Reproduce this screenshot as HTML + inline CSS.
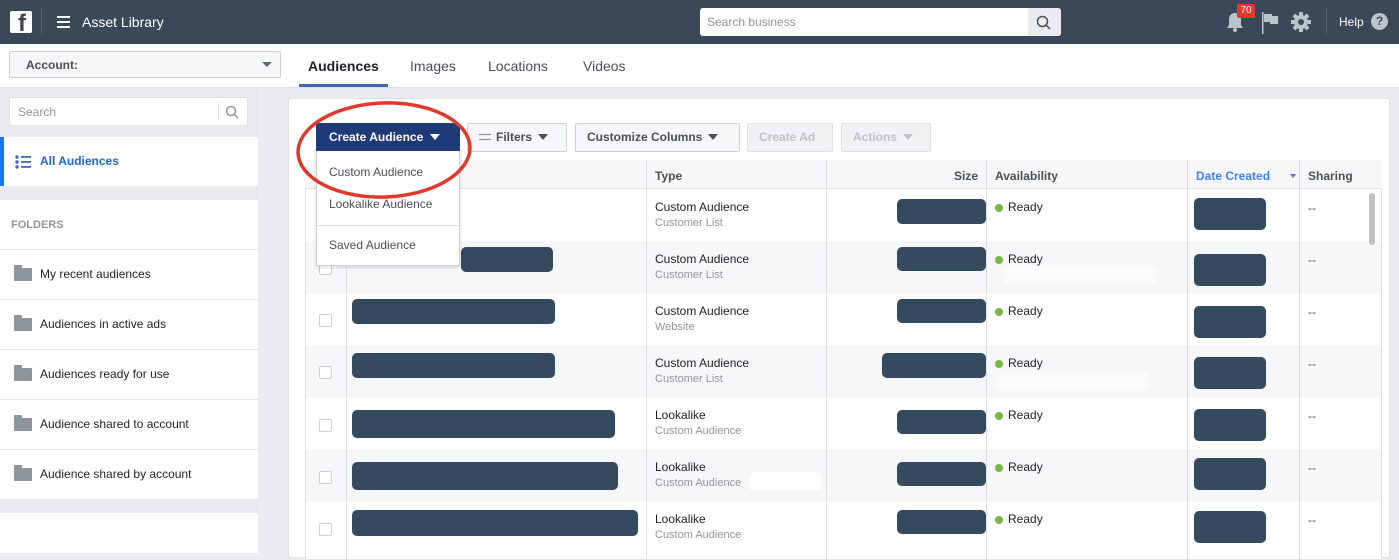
<!DOCTYPE html>
<html><head><meta charset="utf-8"><style>
*{box-sizing:border-box;margin:0;padding:0}
body{width:1399px;height:553px;overflow:hidden;font-family:"Liberation Sans",Helvetica,Arial,sans-serif;background:#e9ebee;position:relative;font-size:12px;color:#1d2129}
.a{position:absolute}
.pill{position:absolute;background:#344a5f;border-radius:5px}
.t1{position:absolute;font-size:12px;color:#1d2129}
.t2{position:absolute;font-size:11px;color:#90949c}
.btn{position:absolute;top:123px;height:29px;border:1px solid #ced0d4;border-radius:2px;background:#f6f7f9;font-weight:bold;font-size:12px;color:#4b4f56;line-height:27px;padding:0 11px}
.dis{color:#bec3c9;background:#f0f1f3;border-color:#dddfe2}
.tri{display:inline-block;width:0;height:0;border-left:5px solid transparent;border-right:5px solid transparent;border-top:6px solid #4b4f56;vertical-align:middle;margin-left:6px;margin-top:-2px}
.fold{position:absolute;left:0;width:258px;height:50px;background:#fff;border-bottom:1px solid #e5e6e9;font-size:12px;color:#1d2129}
.fold span{position:absolute;left:40px;top:17px}
.fold i{position:absolute;left:14px;top:18px;width:18px;height:13px;background:#8d949e;border-radius:1px}
.fold i:before{content:"";position:absolute;left:0;top:-3px;width:8px;height:4px;background:#8d949e;border-radius:1px 1px 0 0}
.cb{position:absolute;left:319px;width:13px;height:13px;border:1px solid #ccd0d5;border-radius:2px;background:#fff}
.dot{position:absolute;left:995px;width:8px;height:8px;border-radius:50%;background:#75b843}
</style></head><body>
<!-- top bar -->
<div class="a" style="left:0;top:0;width:1399px;height:44px;background:#3a4859"></div>
<div class="a" style="left:10px;top:11px;width:22px;height:22px;background:#fff;border-radius:2px;overflow:hidden"><span style="position:absolute;left:8px;top:1px;font-weight:bold;font-size:24px;color:#3a4859;line-height:24px">f</span></div>
<div class="a" style="left:41px;top:8px;width:1px;height:28px;background:#4f5d6e"></div>
<div class="a" style="left:57px;top:16px;width:13px;height:2px;background:#fff;box-shadow:0 5px 0 #fff,0 10px 0 #fff"></div>
<div class="a" style="left:82px;top:14px;color:#fff;font-size:14px">Asset Library</div>
<div class="a" style="left:700px;top:8px;width:361px;height:28px;background:#fff;border-radius:3px"></div>
<div class="a" style="left:707px;top:15px;color:#90949c;font-size:12px">Search business</div>
<div class="a" style="left:1028px;top:8px;width:33px;height:28px;background:#e9ebee;border-radius:0 3px 3px 0"></div>
<svg class="a" style="left:1036px;top:15px" width="16" height="16"><circle cx="6.5" cy="6.5" r="5" fill="none" stroke="#4b4f56" stroke-width="1.5"/><line x1="10" y1="10" x2="14" y2="14" stroke="#4b4f56" stroke-width="1.5"/></svg>
<svg class="a" style="left:1225px;top:11px" width="20" height="22"><path d="M10 2c-4 0-6 3-6 7v5l-2 3h16l-2-3V9c0-4-2-7-6-7z" fill="#bdc3cb"/><circle cx="10" cy="19" r="2" fill="#bdc3cb"/></svg>
<div class="a" style="left:1237px;top:4px;width:18px;height:14px;background:#e8382b;border-radius:2px;color:#fff;font-size:10px;text-align:center;line-height:14px">70</div>
<svg class="a" style="left:1260px;top:12px" width="20" height="22"><rect x="2" y="0" width="1.5" height="22" fill="#bdc3cb"/><path d="M4 2h8v2h6v8h-8v-2H4z" fill="#bdc3cb"/></svg>
<svg class="a" style="left:1290px;top:11px" width="22" height="22" viewBox="0 0 22 22"><g fill="#bdc3cb"><circle cx="11" cy="11" r="7"/><rect x="9" y="1" width="4" height="20"/><rect x="1" y="9" width="20" height="4"/><rect x="9" y="1" width="4" height="20" transform="rotate(45 11 11)"/><rect x="9" y="1" width="4" height="20" transform="rotate(-45 11 11)"/></g><circle cx="11" cy="11" r="3" fill="#3a4859"/></svg>
<div class="a" style="left:1326px;top:8px;width:1px;height:28px;background:#4f5d6e"></div>
<div class="a" style="left:1339px;top:15px;color:#fff;font-size:12px">Help</div>
<div class="a" style="left:1371px;top:13px;width:17px;height:17px;border-radius:50%;background:#bdc3cb;color:#3a4859;font-weight:bold;font-size:12px;text-align:center;line-height:17px">?</div>
<!-- second bar -->
<div class="a" style="left:0;top:44px;width:1399px;height:44px;background:#fff;border-bottom:1px solid #dddfe2"></div>
<div class="a" style="left:9px;top:51px;width:272px;height:27px;background:#f6f7f9;border:1px solid #ccd0d5;border-radius:2px"></div>
<div class="a" style="left:26px;top:58px;font-weight:bold;color:#4b4f56;font-size:12px">Account:</div>
<div class="a" style="left:262px;top:62px;border-left:5px solid transparent;border-right:5px solid transparent;border-top:5px solid #606770"></div>
<div class="a" style="left:308px;top:58px;font-size:14px;font-weight:bold;color:#1d2129">Audiences</div>
<div class="a" style="left:299px;top:84px;width:89px;height:3px;background:#4267b2"></div>
<div class="a" style="left:410px;top:58px;font-size:14px;color:#4b4f56">Images</div>
<div class="a" style="left:488px;top:58px;font-size:14px;color:#4b4f56">Locations</div>
<div class="a" style="left:583px;top:58px;font-size:14px;color:#4b4f56">Videos</div>
<!-- sidebar -->
<div class="a" style="left:0;top:88px;width:258px;height:465px;background:#e9ebee;border-right:1px solid #dddfe2"></div>
<div class="a" style="left:9px;top:97px;width:239px;height:29px;background:#fff;border:1px solid #dddfe2"></div>
<div class="a" style="left:18px;top:105px;color:#90949c;font-size:12px">Search</div>
<div class="a" style="left:218px;top:103px;width:1px;height:17px;background:#dddfe2"></div>
<svg class="a" style="left:225px;top:105px" width="14" height="14"><circle cx="6" cy="6" r="4.5" fill="none" stroke="#90949c" stroke-width="1.5"/><line x1="9" y1="9" x2="13" y2="13" stroke="#90949c" stroke-width="1.5"/></svg>
<div class="a" style="left:0;top:137px;width:258px;height:49px;background:#fff"></div>
<div class="a" style="left:0;top:137px;width:4px;height:49px;background:#1877f2"></div>
<svg class="a" style="left:15px;top:155px" width="17" height="14"><g fill="#4267b2"><circle cx="2" cy="2" r="1.7"/><circle cx="2" cy="7" r="1.7"/><circle cx="2" cy="12" r="1.7"/><rect x="6" y="1" width="10" height="1.8"/><rect x="6" y="6" width="10" height="1.8"/><rect x="6" y="11" width="10" height="1.8"/></g></svg>
<div class="a" style="left:40px;top:154px;color:#1a66d6;font-weight:bold;font-size:12px">All Audiences</div>
<div class="a" style="left:0;top:200px;width:258px;height:50px;background:#fff;border-bottom:1px solid #e5e6e9"></div>
<div class="a" style="left:11px;top:219px;color:#90949c;font-weight:bold;font-size:11px">FOLDERS</div>
<div class="fold" style="top:250px"><i></i><span>My recent audiences</span></div>
<div class="fold" style="top:300px"><i></i><span>Audiences in active ads</span></div>
<div class="fold" style="top:350px"><i></i><span>Audiences ready for use</span></div>
<div class="fold" style="top:400px"><i></i><span>Audience shared to account</span></div>
<div class="fold" style="top:450px"><i></i><span>Audience shared by account</span></div>
<div class="a" style="left:0;top:513px;width:258px;height:40px;background:#fff"></div>
<!-- card -->
<div class="a" style="left:288px;top:98px;width:1102px;height:460px;background:#fff;border:1px solid #dddfe2;border-radius:3px"></div>
<div class="a" style="left:305px;top:160px;width:1077px;height:400px;background:#fff;border:1px solid #dddfe2"></div>
<div class="a" style="left:305px;top:160px;width:1077px;height:29px;background:#f6f7f9;border-bottom:1px solid #dddfe2"></div>
<div class="a" style="left:306px;top:241px;width:1075px;height:52px;background:#f6f7f9"></div>
<div class="a" style="left:306px;top:345px;width:1075px;height:52px;background:#f6f7f9"></div>
<div class="a" style="left:306px;top:449px;width:1075px;height:52px;background:#f6f7f9"></div>
<div class="a" style="left:346px;top:160px;width:1px;height:400px;background:#dddfe2"></div>
<div class="a" style="left:646px;top:160px;width:1px;height:400px;background:#dddfe2"></div>
<div class="a" style="left:826px;top:160px;width:1px;height:400px;background:#dddfe2"></div>
<div class="a" style="left:986px;top:160px;width:1px;height:400px;background:#dddfe2"></div>
<div class="a" style="left:1187px;top:160px;width:1px;height:400px;background:#dddfe2"></div>
<div class="a" style="left:1299px;top:160px;width:1px;height:400px;background:#dddfe2"></div>
<div class="a" style="left:655px;top:169px;font-weight:bold;color:#4b4f56">Type</div>
<div class="a" style="left:954px;top:169px;font-weight:bold;color:#4b4f56">Size</div>
<div class="a" style="left:995px;top:169px;font-weight:bold;color:#4b4f56">Availability</div>
<div class="a" style="left:1196px;top:169px;font-weight:bold;color:#4080ff">Date Created</div>
<div class="a" style="left:1290px;top:174px;border-left:3px solid transparent;border-right:3px solid transparent;border-top:4px solid #4080ff"></div>
<div class="a" style="left:1308px;top:169px;font-weight:bold;color:#4b4f56">Sharing</div>
<div class="a" style="left:1369px;top:193px;width:6px;height:52px;background:#c1c1c1;border-radius:3px"></div>
<!-- rows -->
<div class="cb" style="top:262px"></div><div class="cb" style="top:314px"></div><div class="cb" style="top:366px"></div><div class="cb" style="top:419px"></div><div class="cb" style="top:471px"></div><div class="cb" style="top:523px"></div>
<div class="pill" style="left:461px;top:247px;width:92px;height:25px"></div>
<div class="pill" style="left:352px;top:299px;width:203px;height:25px"></div>
<div class="pill" style="left:352px;top:353px;width:203px;height:25px"></div>
<div class="pill" style="left:352px;top:410px;width:263px;height:28px"></div>
<div class="pill" style="left:352px;top:462px;width:266px;height:28px"></div>
<div class="pill" style="left:352px;top:510px;width:286px;height:26px"></div>
<div class="t1" style="left:655px;top:200px">Custom Audience</div><div class="t2" style="left:655px;top:217px">Customer List</div>
<div class="t1" style="left:655px;top:252px">Custom Audience</div><div class="t2" style="left:655px;top:269px">Customer List</div>
<div class="t1" style="left:655px;top:304px">Custom Audience</div><div class="t2" style="left:655px;top:321px">Website</div>
<div class="t1" style="left:655px;top:356px">Custom Audience</div><div class="t2" style="left:655px;top:373px">Customer List</div>
<div class="t1" style="left:655px;top:408px">Lookalike</div><div class="t2" style="left:655px;top:425px">Custom Audience</div>
<div class="t1" style="left:655px;top:460px">Lookalike</div><div class="t2" style="left:655px;top:477px">Custom Audience</div>
<div class="a" style="left:749px;top:472px;width:73px;height:19px;background:#fff;border-radius:5px"></div>
<div class="t1" style="left:655px;top:512px">Lookalike</div><div class="t2" style="left:655px;top:529px">Custom Audience</div>
<div class="pill" style="left:897px;top:199px;width:89px;height:25px"></div>
<div class="pill" style="left:897px;top:247px;width:89px;height:24px"></div>
<div class="pill" style="left:897px;top:299px;width:89px;height:24px"></div>
<div class="pill" style="left:882px;top:353px;width:104px;height:25px"></div>
<div class="pill" style="left:897px;top:410px;width:89px;height:24px"></div>
<div class="pill" style="left:897px;top:462px;width:89px;height:24px"></div>
<div class="pill" style="left:897px;top:510px;width:89px;height:24px"></div>
<div class="dot" style="top:204px"></div><div class="t1" style="left:1008px;top:200px">Ready</div>
<div class="dot" style="top:256px"></div><div class="t1" style="left:1008px;top:252px">Ready</div>
<div class="a" style="left:1003px;top:266px;width:153px;height:19px;background:#fbfbfb;border-radius:5px"></div>
<div class="dot" style="top:308px"></div><div class="t1" style="left:1008px;top:304px">Ready</div>
<div class="dot" style="top:360px"></div><div class="t1" style="left:1008px;top:356px">Ready</div>
<div class="a" style="left:996px;top:372px;width:153px;height:18px;background:#fbfbfb;border-radius:5px"></div>
<div class="dot" style="top:412px"></div><div class="t1" style="left:1008px;top:408px">Ready</div>
<div class="dot" style="top:464px"></div><div class="t1" style="left:1008px;top:460px">Ready</div>
<div class="dot" style="top:516px"></div><div class="t1" style="left:1008px;top:512px">Ready</div>
<div class="pill" style="left:1194px;top:198px;width:72px;height:32px"></div>
<div class="pill" style="left:1194px;top:254px;width:72px;height:32px"></div>
<div class="pill" style="left:1194px;top:306px;width:72px;height:32px"></div>
<div class="pill" style="left:1194px;top:357px;width:72px;height:32px"></div>
<div class="pill" style="left:1194px;top:409px;width:72px;height:32px"></div>
<div class="pill" style="left:1194px;top:458px;width:72px;height:32px"></div>
<div class="pill" style="left:1194px;top:511px;width:72px;height:32px"></div>
<div class="t1" style="left:1308px;top:201px;color:#4b4f56">--</div>
<div class="t1" style="left:1308px;top:253px;color:#4b4f56">--</div>
<div class="t1" style="left:1308px;top:305px;color:#4b4f56">--</div>
<div class="t1" style="left:1308px;top:357px;color:#4b4f56">--</div>
<div class="t1" style="left:1308px;top:409px;color:#4b4f56">--</div>
<div class="t1" style="left:1308px;top:461px;color:#4b4f56">--</div>
<div class="t1" style="left:1308px;top:513px;color:#4b4f56">--</div>
<!-- toolbar -->
<div class="btn" style="left:467px;width:100px"><svg width="12" height="10" style="vertical-align:middle;margin-right:5px;margin-top:-2px"><g stroke="#90949c" stroke-width="1.2"><line x1="0" y1="2.5" x2="12" y2="2.5"/><line x1="0" y1="7.5" x2="12" y2="7.5"/></g></svg>Filters<span class="tri"></span></div>
<div class="btn" style="left:575px;width:165px">Customize Columns<span class="tri"></span></div>
<div class="btn dis" style="left:747px;width:86px">Create Ad</div>
<div class="btn dis" style="left:841px;width:90px">Actions<span class="tri" style="border-top-color:#bec3c9"></span></div>
<!-- dropdown -->
<div class="a" style="left:316px;top:150px;width:144px;height:116px;background:#fff;border:1px solid #ccd0d5;border-top:none;box-shadow:0 2px 4px rgba(0,0,0,.12)"></div>
<div class="a" style="left:329px;top:165px;color:#4b4f56;font-size:12px">Custom Audience</div>
<div class="a" style="left:329px;top:197px;color:#4b4f56;font-size:12px">Lookalike Audience</div>
<div class="a" style="left:317px;top:225px;width:142px;height:1px;background:#dddfe2"></div>
<div class="a" style="left:329px;top:238px;color:#4b4f56;font-size:12px">Saved Audience</div>
<div class="a" style="left:316px;top:123px;width:144px;height:28px;background:#1e3a78;border-radius:2px 2px 0 0;color:#fff;font-weight:bold;font-size:12px;line-height:28px;padding-left:13px">Create Audience<span class="tri" style="border-top-color:#fff;margin-left:7px"></span></div>
<svg class="a" style="left:290px;top:96px" width="190" height="108"><ellipse cx="94" cy="54" rx="86" ry="47" fill="none" stroke="#e0392b" stroke-width="3.5" transform="rotate(-2 94 54)"/></svg>
</body></html>
